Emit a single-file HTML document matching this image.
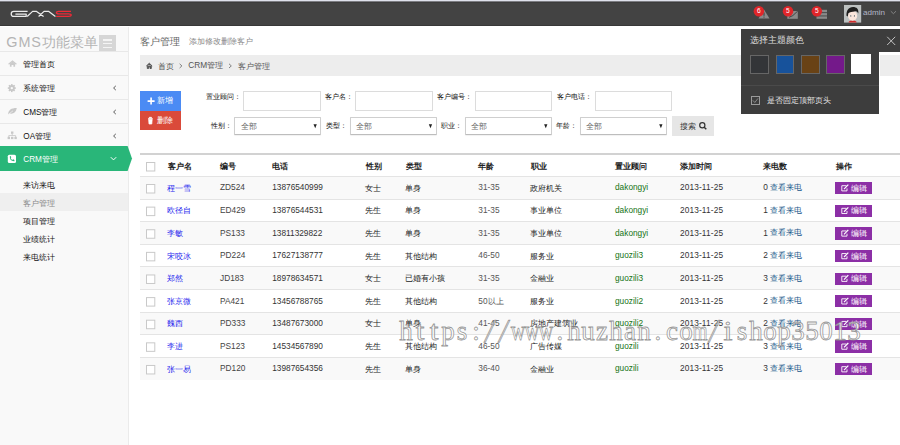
<!DOCTYPE html>
<html><head><meta charset="utf-8"><style>
*{margin:0;padding:0;box-sizing:border-box}
html,body{width:900px;height:445px;overflow:hidden;background:#fff;font-family:"Liberation Sans",sans-serif;color:#333}
.a{position:absolute;white-space:nowrap}
svg{position:absolute;overflow:visible}
</style></head><body>
<div class="a" style="left:0px;top:0px;width:900px;height:26px;background:#434343;"></div>
<div class="a" style="left:0px;top:0px;width:900px;height:1px;background:#dfe1ec;"></div>
<div class="a" style="left:0px;top:1px;width:900px;height:1px;background:#7d7d82;"></div>
<div class="a" style="left:0px;top:2px;width:900px;height:1px;background:#3c3c3c;"></div>
<div class="a" style="left:0px;top:25px;width:900px;height:1px;background:#383838;"></div>
<div class="a" style="left:0px;top:26px;width:900px;height:1px;background:#ffffff;"></div>
<svg style="left:0;top:0" width="900" height="27">
<g fill="none" stroke-linecap="butt" stroke-linejoin="round">
<path d="M27.6,11.4 H13.8 C11.9,11.4 11.2,12.6 11.2,13.9 C11.2,15.2 11.9,16.4 13.8,16.4 H26.2 L26.2,14 H15.4" stroke="#ececec" stroke-width="1.25"/>
<path d="M27.2,16.5 L32.6,11.4 H36.6 L43.6,16.5 M38.6,16.5 L44,11.4 H48.8 L55.4,16.5" stroke="#ececec" stroke-width="1.25"/>
<path d="M71,11.4 H58.8 C57,11.4 56.4,12.2 56.4,12.8 C56.4,13.5 57.2,13.9 58.8,13.9 H68.6 C70.4,13.9 71.2,14.5 71.2,15.1 C71.2,15.9 70.4,16.4 68.6,16.4 H56.2" stroke="#ee2a36" stroke-width="1.3"/>
</g></svg>
<svg style="left:0;top:0" width="900" height="27">
<path d="M764,9.5 L769.5,18.5 H758.5 Z" fill="#8a8a8a"/><path d="M764,12.5 V15.8 M764,16.6 V17.6" stroke="#3a3a3a" stroke-width="1"/>
<rect x="787.3" y="11" width="10.5" height="7.8" fill="#8a8a8a"/>
<path d="M789,17.3 L792.8,15.6 L797.8,11" stroke="#434343" stroke-width="1" fill="none"/>
<rect x="816.5" y="9.8" width="10.5" height="2.4" fill="#8a8a8a"/>
<rect x="816.5" y="13.1" width="10.5" height="2.4" fill="#8a8a8a"/>
<rect x="816.5" y="16.4" width="10.5" height="2.4" fill="#8a8a8a"/>
<circle cx="758.9" cy="11.3" r="5.25" fill="#e0262a"/>
<circle cx="788" cy="11.3" r="5.25" fill="#e0262a"/>
<circle cx="816.8" cy="11.3" r="5.25" fill="#e0262a"/>
</svg>
<div class="a" style="left:757.0px;top:6.9px;font-size:6.6px;line-height:7.92px;color:#fff;">6</div>
<div class="a" style="left:786.1px;top:6.9px;font-size:6.6px;line-height:7.92px;color:#fff;">5</div>
<div class="a" style="left:814.9px;top:6.9px;font-size:6.6px;line-height:7.92px;color:#fff;">5</div>
<svg style="left:844px;top:4.6px" width="17.2" height="17.6" viewBox="0 0 17.2 17.6">
<rect width="17.2" height="17.6" fill="#bcc0c0"/>
<path d="M4.5,17.6 C4.8,16.2 6.5,15.6 8.6,15.6 C10.7,15.6 12.4,16.2 12.7,17.6 Z" fill="#d42a2a"/>
<ellipse cx="8.6" cy="10.8" rx="4.6" ry="4.9" fill="#fae6dc"/>
<path d="M2.5,10.8 C2.2,5.5 4.5,2 9,2 C12.5,2 15,4 14.3,8.5 C13.5,6.8 12.2,6.2 10.5,6.4 C8.2,6.6 5.8,6.8 4.3,8.2 L3.8,11.5 Z" fill="#1e1e1e"/>
<ellipse cx="6.7" cy="10.8" rx="1" ry="0.9" fill="#fff"/><ellipse cx="10.5" cy="10.8" rx="1" ry="0.9" fill="#fff"/>
<circle cx="6.8" cy="10.9" r="0.6" fill="#333"/><circle cx="10.4" cy="10.9" r="0.6" fill="#333"/>
</svg>
<div class="a" style="left:863.0px;top:8.3px;font-size:8.1px;line-height:9.72px;color:#b2b6c8;">admin</div>
<svg style="left:0;top:0" width="900" height="27"><path d="M890.8,11.2 L893.4,13.7 L896,11.2" stroke="#8a8a8a" stroke-width="0.9" fill="none"/></svg>
<div class="a" style="left:0px;top:27px;width:128px;height:418px;background:#f9f9f9;"></div>
<div class="a" style="left:128px;top:27px;width:1px;height:418px;background:#ebebeb;"></div>
<div class="a" style="left:6.3px;top:34.3px;font-size:14.4px;line-height:17.28px;color:#b4b4b4;letter-spacing:0.9px">GMS</div>
<div class="a" style="left:41.8px;top:34.6px;font-size:13.6px;line-height:16.32px;color:#b4b4b4;">功能菜单</div>
<div class="a" style="left:99px;top:35px;width:17px;height:16.5px;background:#d6d6d6;"></div>
<div class="a" style="left:103px;top:39.4px;width:9px;height:1.2px;background:#f4f4f4;"></div>
<div class="a" style="left:103px;top:43.0px;width:9px;height:1.2px;background:#f4f4f4;"></div>
<div class="a" style="left:103px;top:46.6px;width:9px;height:1.2px;background:#f4f4f4;"></div>
<div class="a" style="left:0px;top:51px;width:128px;height:1px;background:#e8e8e8;"></div>
<div class="a" style="left:0px;top:75px;width:128px;height:1px;background:#e8e8e8;"></div>
<div class="a" style="left:0px;top:99px;width:128px;height:1px;background:#e8e8e8;"></div>
<div class="a" style="left:0px;top:123px;width:128px;height:1px;background:#e8e8e8;"></div>
<div class="a" style="left:23.3px;top:60.3px;font-size:8.2px;line-height:9.84px;color:#111;">管理首页</div>
<div class="a" style="left:23.3px;top:84.3px;font-size:8.2px;line-height:9.84px;color:#111;">系统管理</div>
<svg style="left:0;top:0" width="128" height="300"><path d="M115.8,85.9 L113.6,88 L115.8,90.1" stroke="#444" stroke-width="0.9" fill="none"/></svg>
<div class="a" style="left:23.3px;top:108.3px;font-size:8.2px;line-height:9.84px;color:#111;">CMS管理</div>
<svg style="left:0;top:0" width="128" height="300"><path d="M115.8,109.9 L113.6,112 L115.8,114.1" stroke="#444" stroke-width="0.9" fill="none"/></svg>
<div class="a" style="left:23.3px;top:132.3px;font-size:8.2px;line-height:9.84px;color:#111;">OA管理</div>
<svg style="left:0;top:0" width="128" height="300"><path d="M115.8,133.9 L113.6,136 L115.8,138.1" stroke="#444" stroke-width="0.9" fill="none"/></svg>
<svg style="left:0;top:0" width="128" height="200">
<path d="M8.6,64.3 L12.5,61.0 L16.4,64.3" stroke="#cbcbcb" stroke-width="1.2" fill="none"/><path d="M9.9,63.4 L12.5,61.4 L15.1,63.4 V66.8 H13.4 V64.9 H11.6 V66.8 H9.9 Z" fill="#cbcbcb"/>
<g transform="translate(11.8,88.1)" fill="#c8c8c8"><rect x="-0.8" y="-4" width="1.6" height="8"/><rect x="-0.8" y="-4" width="1.6" height="8" transform="rotate(45)"/><rect x="-0.8" y="-4" width="1.6" height="8" transform="rotate(90)"/><rect x="-0.8" y="-4" width="1.6" height="8" transform="rotate(135)"/><circle r="3"/><circle r="1.2" fill="#f9f9f9"/></g>
<path d="M8,114.5 C8.5,110 11,108 16.8,108 C16,112.5 13.5,114.2 9.5,113.5" fill="#c8c8c8"/>
<path d="M8,114.6 L13,110.8" stroke="#f9f9f9" stroke-width="0.6"/>
<rect x="11" y="131.5" width="2.4" height="2.3" fill="#c8c8c8"/>
<path d="M12.2,133.8 V135.5 M8.8,137 V135.5 H15.6 V137" stroke="#c8c8c8" stroke-width="0.8" fill="none"/>
<rect x="7.6" y="136.8" width="2.4" height="2.3" fill="#c8c8c8"/><rect x="11" y="136.8" width="2.4" height="2.3" fill="#c8c8c8"/><rect x="14.4" y="136.8" width="2.4" height="2.3" fill="#c8c8c8"/>
</svg>
<svg style="left:0;top:0" width="140" height="200">
<path d="M0,146 H127.6 L132,158.5 L127.6,171 H0 Z" fill="#29b679"/>
<rect x="7.8" y="154.8" width="8.2" height="8.2" rx="1.5" fill="#fff"/>
<path d="M9.8,156.6 C9.6,159.5 11.5,161.5 14.3,161.3 L14.5,160 L13.1,159.3 L12.4,160 C11.5,159.6 10.9,159 10.6,158 L11.3,157.3 L10.6,155.9 Z" fill="#29b679"/>
<path d="M110.8,157.2 L113.5,159.9 L116.2,157.2" stroke="#fff" stroke-width="1" fill="none"/>
</svg>
<div class="a" style="left:23.3px;top:154.6px;font-size:8.2px;line-height:9.84px;color:#fff;">CRM管理</div>
<div class="a" style="left:0px;top:193px;width:128px;height:17.6px;background:#efefef;"></div>
<div class="a" style="left:23.2px;top:180.6px;font-size:8.2px;line-height:9.84px;color:#111;">来访来电</div>
<div class="a" style="left:23.2px;top:198.6px;font-size:8.2px;line-height:9.84px;color:#888;">客户管理</div>
<div class="a" style="left:23.2px;top:216.6px;font-size:8.2px;line-height:9.84px;color:#111;">项目管理</div>
<div class="a" style="left:23.2px;top:234.6px;font-size:8.2px;line-height:9.84px;color:#111;">业绩统计</div>
<div class="a" style="left:23.2px;top:252.60000000000002px;font-size:8.2px;line-height:9.84px;color:#111;">来电统计</div>
<div class="a" style="left:140.3px;top:35.9px;font-size:10.2px;line-height:12.24px;color:#666;">客户管理</div>
<div class="a" style="left:189.2px;top:37.1px;font-size:8.1px;line-height:9.72px;color:#888;">添加修改删除客户</div>
<div class="a" style="left:140px;top:55px;width:760px;height:21px;background:#ededed;"></div>
<svg style="left:0;top:0" width="300" height="80">
<path d="M146.4,66 L149.3,63.2 L152.2,66 M147.3,65.4 V68.5 H148.6 V66.7 H150 V68.5 H151.3 V65.4" stroke="#555" stroke-width="0.9" fill="#555"/>
<path d="M179.6,63.8 L181.9,65.9 L179.6,68" stroke="#666" stroke-width="0.8" fill="none"/>
<path d="M229,63.8 L231.3,65.9 L229,68" stroke="#666" stroke-width="0.8" fill="none"/>
</svg>
<div class="a" style="left:158px;top:60.5px;font-size:8.4px;line-height:10.08px;color:#555;">首页</div>
<div class="a" style="left:188.3px;top:61.1px;font-size:8.3px;line-height:9.96px;color:#555;">CRM管理</div>
<div class="a" style="left:237.6px;top:60.5px;font-size:8.4px;line-height:10.08px;color:#555;">客户管理</div>
<div class="a" style="left:140px;top:91px;width:40.8px;height:19.6px;background:#4b8bf4;"></div>
<div class="a" style="left:140px;top:110.6px;width:40.8px;height:19px;background:#da4a3a;"></div>
<svg style="left:0;top:0" width="200" height="140">
<path d="M151.1,97.6 V104.6 M147.6,101.1 H154.6" stroke="#fff" stroke-width="1.6"/>
<path d="M148,118.5 H152.8 M149.3,118.3 V117.3 H151.5 V118.3 M148.6,119.2 H152.2 L151.8,124 H149 Z" stroke="#fff" stroke-width="0.7" fill="#fff"/>
</svg>
<div class="a" style="left:156.6px;top:96.2px;font-size:8.3px;line-height:9.96px;color:#fff;">新增</div>
<div class="a" style="left:156.6px;top:116.1px;font-size:8.3px;line-height:9.96px;color:#fff;">删除</div>
<div class="a" style="left:205.5px;top:92.6px;font-size:7.3px;line-height:8.76px;color:#111;">置业顾问：</div>
<div class="a" style="left:325.2px;top:92.6px;font-size:7.3px;line-height:8.76px;color:#111;">客户名：</div>
<div class="a" style="left:437px;top:92.6px;font-size:7.3px;line-height:8.76px;color:#111;">客户编号：</div>
<div class="a" style="left:556.6px;top:92.6px;font-size:7.3px;line-height:8.76px;color:#111;">客户电话：</div>
<div class="a" style="left:243.3px;top:91.1px;width:77.4px;height:19.5px;background:#fff;border:1px solid #dcdcdc"></div>
<div class="a" style="left:355.3px;top:91.1px;width:77.4px;height:19.5px;background:#fff;border:1px solid #dcdcdc"></div>
<div class="a" style="left:475.1px;top:91.1px;width:77.4px;height:19.5px;background:#fff;border:1px solid #dcdcdc"></div>
<div class="a" style="left:595px;top:91.1px;width:77.4px;height:19.5px;background:#fff;border:1px solid #dcdcdc"></div>
<div class="a" style="left:211px;top:121.9px;font-size:7.3px;line-height:8.76px;color:#111;">性别：</div>
<div class="a" style="left:326px;top:121.9px;font-size:7.3px;line-height:8.76px;color:#111;">类型：</div>
<div class="a" style="left:441.3px;top:121.9px;font-size:7.3px;line-height:8.76px;color:#111;">职业：</div>
<div class="a" style="left:556.3px;top:121.9px;font-size:7.3px;line-height:8.76px;color:#111;">年龄：</div>
<div class="a" style="left:234.2px;top:117px;width:87px;height:17.8px;background:#fff;border:1px solid #cfcfcf;border-bottom-color:#bdbdbd;border-radius:1px;box-shadow:0 1px 1px rgba(0,0,0,0.06)"></div>
<div class="a" style="left:240.6px;top:121.6px;font-size:8.1px;line-height:9.72px;color:#6a6a6a;">全部</div>
<svg style="left:0;top:0" width="700" height="140"><path d="M313.5,124.2 L316.79999999999995,124.2 L315.2,128.2 Z" fill="#222"/></svg>
<div class="a" style="left:349.5px;top:117px;width:87px;height:17.8px;background:#fff;border:1px solid #cfcfcf;border-bottom-color:#bdbdbd;border-radius:1px;box-shadow:0 1px 1px rgba(0,0,0,0.06)"></div>
<div class="a" style="left:355.9px;top:121.6px;font-size:8.1px;line-height:9.72px;color:#6a6a6a;">全部</div>
<svg style="left:0;top:0" width="700" height="140"><path d="M428.8,124.2 L432.1,124.2 L430.5,128.2 Z" fill="#222"/></svg>
<div class="a" style="left:464.8px;top:117px;width:87px;height:17.8px;background:#fff;border:1px solid #cfcfcf;border-bottom-color:#bdbdbd;border-radius:1px;box-shadow:0 1px 1px rgba(0,0,0,0.06)"></div>
<div class="a" style="left:471.2px;top:121.6px;font-size:8.1px;line-height:9.72px;color:#6a6a6a;">全部</div>
<svg style="left:0;top:0" width="700" height="140"><path d="M544.1,124.2 L547.4,124.2 L545.8,128.2 Z" fill="#222"/></svg>
<div class="a" style="left:579.9px;top:117px;width:87px;height:17.8px;background:#fff;border:1px solid #cfcfcf;border-bottom-color:#bdbdbd;border-radius:1px;box-shadow:0 1px 1px rgba(0,0,0,0.06)"></div>
<div class="a" style="left:586.3px;top:121.6px;font-size:8.1px;line-height:9.72px;color:#6a6a6a;">全部</div>
<svg style="left:0;top:0" width="700" height="140"><path d="M659.1999999999999,124.2 L662.5,124.2 L660.9,128.2 Z" fill="#222"/></svg>
<div class="a" style="left:672.3px;top:116.3px;width:41.3px;height:19.6px;background:#e6e6e6;"></div>
<div class="a" style="left:679.8px;top:120.8px;font-size:8.4px;line-height:10.08px;color:#333;">搜索</div>
<svg style="left:0;top:0" width="720" height="140"><circle cx="702.3" cy="125.3" r="2.6" fill="none" stroke="#333" stroke-width="1.2"/><path d="M704.2,127.2 L706.3,129.3" stroke="#333" stroke-width="1.4"/></svg>
<div class="a" style="left:140px;top:153px;width:760px;height:2px;background:#d2d2d2;"></div>
<div class="a" style="left:140px;top:176.0px;width:760px;height:22.62px;background:#f9f9f9;"></div>
<div class="a" style="left:140px;top:176.0px;width:760px;height:1px;background:#e4e4e4;"></div>
<div class="a" style="left:140px;top:198.62px;width:760px;height:1px;background:#e4e4e4;"></div>
<div class="a" style="left:140px;top:221.24px;width:760px;height:22.62px;background:#f9f9f9;"></div>
<div class="a" style="left:140px;top:221.24px;width:760px;height:1px;background:#e4e4e4;"></div>
<div class="a" style="left:140px;top:243.86px;width:760px;height:1px;background:#e4e4e4;"></div>
<div class="a" style="left:140px;top:266.48px;width:760px;height:22.62px;background:#f9f9f9;"></div>
<div class="a" style="left:140px;top:266.48px;width:760px;height:1px;background:#e4e4e4;"></div>
<div class="a" style="left:140px;top:289.1px;width:760px;height:1px;background:#e4e4e4;"></div>
<div class="a" style="left:140px;top:311.72px;width:760px;height:22.62px;background:#f9f9f9;"></div>
<div class="a" style="left:140px;top:311.72px;width:760px;height:1px;background:#e4e4e4;"></div>
<div class="a" style="left:140px;top:334.34px;width:760px;height:1px;background:#e4e4e4;"></div>
<div class="a" style="left:140px;top:356.96px;width:760px;height:22.62px;background:#f9f9f9;"></div>
<div class="a" style="left:140px;top:356.96px;width:760px;height:1px;background:#e4e4e4;"></div>
<div class="a" style="left:167.8px;top:162.0px;font-size:8.3px;line-height:9.96px;color:#222;font-weight:bold">客户名</div>
<div class="a" style="left:220px;top:162.0px;font-size:8.3px;line-height:9.96px;color:#222;font-weight:bold">编号</div>
<div class="a" style="left:272.2px;top:162.0px;font-size:8.3px;line-height:9.96px;color:#222;font-weight:bold">电话</div>
<div class="a" style="left:366.1px;top:162.0px;font-size:8.3px;line-height:9.96px;color:#222;font-weight:bold">性别</div>
<div class="a" style="left:405.7px;top:162.0px;font-size:8.3px;line-height:9.96px;color:#222;font-weight:bold">类型</div>
<div class="a" style="left:478.3px;top:162.0px;font-size:8.3px;line-height:9.96px;color:#222;font-weight:bold">年龄</div>
<div class="a" style="left:530.6px;top:162.0px;font-size:8.3px;line-height:9.96px;color:#222;font-weight:bold">职业</div>
<div class="a" style="left:615px;top:162.0px;font-size:8.3px;line-height:9.96px;color:#222;font-weight:bold">置业顾问</div>
<div class="a" style="left:679.9px;top:162.0px;font-size:8.3px;line-height:9.96px;color:#222;font-weight:bold">添加时间</div>
<div class="a" style="left:763.3px;top:162.0px;font-size:8.3px;line-height:9.96px;color:#222;font-weight:bold">来电数</div>
<div class="a" style="left:835.6px;top:162.0px;font-size:8.3px;line-height:9.96px;color:#222;font-weight:bold">操作</div>
<svg style="left:0;top:0" width="200" height="400"><rect x="146.5" y="162.50" width="8.3" height="8.5" fill="#fff" stroke="#c9c9c9" stroke-width="1"/><rect x="146.5" y="184.50" width="8.3" height="8.5" fill="#fff" stroke="#c9c9c9" stroke-width="1"/><rect x="146.5" y="207.12" width="8.3" height="8.5" fill="#fff" stroke="#c9c9c9" stroke-width="1"/><rect x="146.5" y="229.74" width="8.3" height="8.5" fill="#fff" stroke="#c9c9c9" stroke-width="1"/><rect x="146.5" y="252.36" width="8.3" height="8.5" fill="#fff" stroke="#c9c9c9" stroke-width="1"/><rect x="146.5" y="274.98" width="8.3" height="8.5" fill="#fff" stroke="#c9c9c9" stroke-width="1"/><rect x="146.5" y="297.60" width="8.3" height="8.5" fill="#fff" stroke="#c9c9c9" stroke-width="1"/><rect x="146.5" y="320.22" width="8.3" height="8.5" fill="#fff" stroke="#c9c9c9" stroke-width="1"/><rect x="146.5" y="342.84" width="8.3" height="8.5" fill="#fff" stroke="#c9c9c9" stroke-width="1"/><rect x="146.5" y="365.46" width="8.3" height="8.5" fill="#fff" stroke="#c9c9c9" stroke-width="1"/></svg>
<div class="a" style="left:167.10000000000002px;top:183.7px;font-size:7.8px;line-height:9.36px;color:#2626ee;">程一雪</div>
<div class="a" style="left:220px;top:183.4px;font-size:8.3px;line-height:9.96px;color:#444;">ZD524</div>
<div class="a" style="left:272.2px;top:183.4px;font-size:8.3px;line-height:9.96px;color:#333;">13876540999</div>
<div class="a" style="left:365.40000000000003px;top:183.7px;font-size:7.8px;line-height:9.36px;color:#222;">女士</div>
<div class="a" style="left:405.0px;top:183.7px;font-size:7.8px;line-height:9.36px;color:#222;">单身</div>
<div class="a" style="left:478.3px;top:183.4px;font-size:8.3px;line-height:9.96px;color:#555;">31-35</div>
<div class="a" style="left:529.9px;top:183.7px;font-size:7.8px;line-height:9.36px;color:#222;">政府机关</div>
<div class="a" style="left:615px;top:183.4px;font-size:8.3px;line-height:9.96px;color:#157315;">dakongyi</div>
<div class="a" style="left:679.9px;top:183.4px;font-size:8.3px;line-height:9.96px;color:#333;letter-spacing:0.15px">2013-11-25</div>
<div class="a" style="left:763.3px;top:183.4px;font-size:8.3px;line-height:9.96px;color:#333;">0</div>
<div class="a" style="left:769.8px;top:183.2px;font-size:7.6px;line-height:9.12px;color:#18578a;">查看来电</div>
<div class="a" style="left:835.1px;top:182.1px;width:36.7px;height:12.2px;background:#8c2fa6;"></div>
<svg style="left:0;top:0" width="900" height="400"><path d="M846.5,185.70 H841.8 V190.90 H847 V188.40" stroke="#fff" stroke-width="0.9" fill="none"/><path d="M844,189.10 L848.3,184.70" stroke="#fff" stroke-width="1.2"/></svg>
<div class="a" style="left:850.8px;top:183.8px;font-size:7.7px;line-height:9.24px;color:#fff;">编辑</div>
<div class="a" style="left:167.10000000000002px;top:206.32px;font-size:7.8px;line-height:9.36px;color:#2626ee;">欧径自</div>
<div class="a" style="left:220px;top:206.02px;font-size:8.3px;line-height:9.96px;color:#444;">ED429</div>
<div class="a" style="left:272.2px;top:206.02px;font-size:8.3px;line-height:9.96px;color:#333;">13876544531</div>
<div class="a" style="left:365.40000000000003px;top:206.32px;font-size:7.8px;line-height:9.36px;color:#222;">先生</div>
<div class="a" style="left:405.0px;top:206.32px;font-size:7.8px;line-height:9.36px;color:#222;">单身</div>
<div class="a" style="left:478.3px;top:206.02px;font-size:8.3px;line-height:9.96px;color:#555;">31-35</div>
<div class="a" style="left:529.9px;top:206.32px;font-size:7.8px;line-height:9.36px;color:#222;">事业单位</div>
<div class="a" style="left:615px;top:206.02px;font-size:8.3px;line-height:9.96px;color:#157315;">dakongyi</div>
<div class="a" style="left:679.9px;top:206.02px;font-size:8.3px;line-height:9.96px;color:#333;letter-spacing:0.15px">2013-11-25</div>
<div class="a" style="left:763.3px;top:206.02px;font-size:8.3px;line-height:9.96px;color:#333;">1</div>
<div class="a" style="left:769.8px;top:205.82px;font-size:7.6px;line-height:9.12px;color:#18578a;">查看来电</div>
<div class="a" style="left:835.1px;top:204.72px;width:36.7px;height:12.2px;background:#8c2fa6;"></div>
<svg style="left:0;top:0" width="900" height="400"><path d="M846.5,208.32 H841.8 V213.52 H847 V211.02" stroke="#fff" stroke-width="0.9" fill="none"/><path d="M844,211.72 L848.3,207.32" stroke="#fff" stroke-width="1.2"/></svg>
<div class="a" style="left:850.8px;top:206.42px;font-size:7.7px;line-height:9.24px;color:#fff;">编辑</div>
<div class="a" style="left:167.10000000000002px;top:228.94px;font-size:7.8px;line-height:9.36px;color:#2626ee;">李敏</div>
<div class="a" style="left:220px;top:228.64px;font-size:8.3px;line-height:9.96px;color:#444;">PS133</div>
<div class="a" style="left:272.2px;top:228.64px;font-size:8.3px;line-height:9.96px;color:#333;">13811329822</div>
<div class="a" style="left:365.40000000000003px;top:228.94px;font-size:7.8px;line-height:9.36px;color:#222;">先生</div>
<div class="a" style="left:405.0px;top:228.94px;font-size:7.8px;line-height:9.36px;color:#222;">单身</div>
<div class="a" style="left:478.3px;top:228.64px;font-size:8.3px;line-height:9.96px;color:#555;">31-35</div>
<div class="a" style="left:529.9px;top:228.94px;font-size:7.8px;line-height:9.36px;color:#222;">事业单位</div>
<div class="a" style="left:615px;top:228.64px;font-size:8.3px;line-height:9.96px;color:#157315;">dakongyi</div>
<div class="a" style="left:679.9px;top:228.64px;font-size:8.3px;line-height:9.96px;color:#333;letter-spacing:0.15px">2013-11-25</div>
<div class="a" style="left:763.3px;top:228.64px;font-size:8.3px;line-height:9.96px;color:#333;">1</div>
<div class="a" style="left:769.8px;top:228.44px;font-size:7.6px;line-height:9.12px;color:#18578a;">查看来电</div>
<div class="a" style="left:835.1px;top:227.34px;width:36.7px;height:12.2px;background:#8c2fa6;"></div>
<svg style="left:0;top:0" width="900" height="400"><path d="M846.5,230.94 H841.8 V236.14 H847 V233.64" stroke="#fff" stroke-width="0.9" fill="none"/><path d="M844,234.34 L848.3,229.94" stroke="#fff" stroke-width="1.2"/></svg>
<div class="a" style="left:850.8px;top:229.04px;font-size:7.7px;line-height:9.24px;color:#fff;">编辑</div>
<div class="a" style="left:167.10000000000002px;top:251.56px;font-size:7.8px;line-height:9.36px;color:#2626ee;">宋咬冰</div>
<div class="a" style="left:220px;top:251.26px;font-size:8.3px;line-height:9.96px;color:#444;">PD224</div>
<div class="a" style="left:272.2px;top:251.26px;font-size:8.3px;line-height:9.96px;color:#333;">17627138777</div>
<div class="a" style="left:365.40000000000003px;top:251.56px;font-size:7.8px;line-height:9.36px;color:#222;">先生</div>
<div class="a" style="left:405.0px;top:251.56px;font-size:7.8px;line-height:9.36px;color:#222;">其他结构</div>
<div class="a" style="left:478.3px;top:251.26px;font-size:8.3px;line-height:9.96px;color:#555;">46-50</div>
<div class="a" style="left:529.9px;top:251.56px;font-size:7.8px;line-height:9.36px;color:#222;">服务业</div>
<div class="a" style="left:615px;top:251.26px;font-size:8.3px;line-height:9.96px;color:#157315;">guozili3</div>
<div class="a" style="left:679.9px;top:251.26px;font-size:8.3px;line-height:9.96px;color:#333;letter-spacing:0.15px">2013-11-25</div>
<div class="a" style="left:763.3px;top:251.26px;font-size:8.3px;line-height:9.96px;color:#333;">2</div>
<div class="a" style="left:769.8px;top:251.06px;font-size:7.6px;line-height:9.12px;color:#18578a;">查看来电</div>
<div class="a" style="left:835.1px;top:249.96px;width:36.7px;height:12.2px;background:#8c2fa6;"></div>
<svg style="left:0;top:0" width="900" height="400"><path d="M846.5,253.56 H841.8 V258.76 H847 V256.26" stroke="#fff" stroke-width="0.9" fill="none"/><path d="M844,256.96 L848.3,252.56" stroke="#fff" stroke-width="1.2"/></svg>
<div class="a" style="left:850.8px;top:251.66px;font-size:7.7px;line-height:9.24px;color:#fff;">编辑</div>
<div class="a" style="left:167.10000000000002px;top:274.18px;font-size:7.8px;line-height:9.36px;color:#2626ee;">郑然</div>
<div class="a" style="left:220px;top:273.88px;font-size:8.3px;line-height:9.96px;color:#444;">JD183</div>
<div class="a" style="left:272.2px;top:273.88px;font-size:8.3px;line-height:9.96px;color:#333;">18978634571</div>
<div class="a" style="left:365.40000000000003px;top:274.18px;font-size:7.8px;line-height:9.36px;color:#222;">女士</div>
<div class="a" style="left:405.0px;top:274.18px;font-size:7.8px;line-height:9.36px;color:#222;">已婚有小孩</div>
<div class="a" style="left:478.3px;top:273.88px;font-size:8.3px;line-height:9.96px;color:#555;">31-35</div>
<div class="a" style="left:529.9px;top:274.18px;font-size:7.8px;line-height:9.36px;color:#222;">金融业</div>
<div class="a" style="left:615px;top:273.88px;font-size:8.3px;line-height:9.96px;color:#157315;">guozili3</div>
<div class="a" style="left:679.9px;top:273.88px;font-size:8.3px;line-height:9.96px;color:#333;letter-spacing:0.15px">2013-11-25</div>
<div class="a" style="left:763.3px;top:273.88px;font-size:8.3px;line-height:9.96px;color:#333;">3</div>
<div class="a" style="left:769.8px;top:273.68px;font-size:7.6px;line-height:9.12px;color:#18578a;">查看来电</div>
<div class="a" style="left:835.1px;top:272.58px;width:36.7px;height:12.2px;background:#8c2fa6;"></div>
<svg style="left:0;top:0" width="900" height="400"><path d="M846.5,276.18 H841.8 V281.38 H847 V278.88" stroke="#fff" stroke-width="0.9" fill="none"/><path d="M844,279.58 L848.3,275.18" stroke="#fff" stroke-width="1.2"/></svg>
<div class="a" style="left:850.8px;top:274.28px;font-size:7.7px;line-height:9.24px;color:#fff;">编辑</div>
<div class="a" style="left:167.10000000000002px;top:296.8px;font-size:7.8px;line-height:9.36px;color:#2626ee;">张京微</div>
<div class="a" style="left:220px;top:296.5px;font-size:8.3px;line-height:9.96px;color:#444;">PA421</div>
<div class="a" style="left:272.2px;top:296.5px;font-size:8.3px;line-height:9.96px;color:#333;">13456788765</div>
<div class="a" style="left:365.40000000000003px;top:296.8px;font-size:7.8px;line-height:9.36px;color:#222;">先生</div>
<div class="a" style="left:405.0px;top:296.8px;font-size:7.8px;line-height:9.36px;color:#222;">其他结构</div>
<div class="a" style="left:478.3px;top:296.5px;font-size:8.3px;line-height:9.96px;color:#555;">50以上</div>
<div class="a" style="left:529.9px;top:296.8px;font-size:7.8px;line-height:9.36px;color:#222;">服务业</div>
<div class="a" style="left:615px;top:296.5px;font-size:8.3px;line-height:9.96px;color:#157315;">guozili2</div>
<div class="a" style="left:679.9px;top:296.5px;font-size:8.3px;line-height:9.96px;color:#333;letter-spacing:0.15px">2013-11-25</div>
<div class="a" style="left:763.3px;top:296.5px;font-size:8.3px;line-height:9.96px;color:#333;">2</div>
<div class="a" style="left:769.8px;top:296.3px;font-size:7.6px;line-height:9.12px;color:#18578a;">查看来电</div>
<div class="a" style="left:835.1px;top:295.2px;width:36.7px;height:12.2px;background:#8c2fa6;"></div>
<svg style="left:0;top:0" width="900" height="400"><path d="M846.5,298.80 H841.8 V304.00 H847 V301.50" stroke="#fff" stroke-width="0.9" fill="none"/><path d="M844,302.20 L848.3,297.80" stroke="#fff" stroke-width="1.2"/></svg>
<div class="a" style="left:850.8px;top:296.9px;font-size:7.7px;line-height:9.24px;color:#fff;">编辑</div>
<div class="a" style="left:167.10000000000002px;top:319.42px;font-size:7.8px;line-height:9.36px;color:#2626ee;">魏西</div>
<div class="a" style="left:220px;top:319.12px;font-size:8.3px;line-height:9.96px;color:#444;">PD333</div>
<div class="a" style="left:272.2px;top:319.12px;font-size:8.3px;line-height:9.96px;color:#333;">13487673000</div>
<div class="a" style="left:365.40000000000003px;top:319.42px;font-size:7.8px;line-height:9.36px;color:#222;">女士</div>
<div class="a" style="left:405.0px;top:319.42px;font-size:7.8px;line-height:9.36px;color:#222;">单身</div>
<div class="a" style="left:478.3px;top:319.12px;font-size:8.3px;line-height:9.96px;color:#555;">41-45</div>
<div class="a" style="left:529.9px;top:319.42px;font-size:7.8px;line-height:9.36px;color:#222;">房地产建筑业</div>
<div class="a" style="left:615px;top:319.12px;font-size:8.3px;line-height:9.96px;color:#157315;">guozili2</div>
<div class="a" style="left:679.9px;top:319.12px;font-size:8.3px;line-height:9.96px;color:#333;letter-spacing:0.15px">2013-11-25</div>
<div class="a" style="left:763.3px;top:319.12px;font-size:8.3px;line-height:9.96px;color:#333;">2</div>
<div class="a" style="left:769.8px;top:318.92px;font-size:7.6px;line-height:9.12px;color:#18578a;">查看来电</div>
<div class="a" style="left:835.1px;top:317.82px;width:36.7px;height:12.2px;background:#8c2fa6;"></div>
<svg style="left:0;top:0" width="900" height="400"><path d="M846.5,321.42 H841.8 V326.62 H847 V324.12" stroke="#fff" stroke-width="0.9" fill="none"/><path d="M844,324.82 L848.3,320.42" stroke="#fff" stroke-width="1.2"/></svg>
<div class="a" style="left:850.8px;top:319.52px;font-size:7.7px;line-height:9.24px;color:#fff;">编辑</div>
<div class="a" style="left:167.10000000000002px;top:342.04px;font-size:7.8px;line-height:9.36px;color:#2626ee;">李进</div>
<div class="a" style="left:220px;top:341.74px;font-size:8.3px;line-height:9.96px;color:#444;">PS123</div>
<div class="a" style="left:272.2px;top:341.74px;font-size:8.3px;line-height:9.96px;color:#333;">14534567890</div>
<div class="a" style="left:365.40000000000003px;top:342.04px;font-size:7.8px;line-height:9.36px;color:#222;">先生</div>
<div class="a" style="left:405.0px;top:342.04px;font-size:7.8px;line-height:9.36px;color:#222;">其他结构</div>
<div class="a" style="left:478.3px;top:341.74px;font-size:8.3px;line-height:9.96px;color:#555;">46-50</div>
<div class="a" style="left:529.9px;top:342.04px;font-size:7.8px;line-height:9.36px;color:#222;">广告传媒</div>
<div class="a" style="left:615px;top:341.74px;font-size:8.3px;line-height:9.96px;color:#157315;">guozili</div>
<div class="a" style="left:679.9px;top:341.74px;font-size:8.3px;line-height:9.96px;color:#333;letter-spacing:0.15px">2013-11-25</div>
<div class="a" style="left:763.3px;top:341.74px;font-size:8.3px;line-height:9.96px;color:#333;">3</div>
<div class="a" style="left:769.8px;top:341.54px;font-size:7.6px;line-height:9.12px;color:#18578a;">查看来电</div>
<div class="a" style="left:835.1px;top:340.44px;width:36.7px;height:12.2px;background:#8c2fa6;"></div>
<svg style="left:0;top:0" width="900" height="400"><path d="M846.5,344.04 H841.8 V349.24 H847 V346.74" stroke="#fff" stroke-width="0.9" fill="none"/><path d="M844,347.44 L848.3,343.04" stroke="#fff" stroke-width="1.2"/></svg>
<div class="a" style="left:850.8px;top:342.14px;font-size:7.7px;line-height:9.24px;color:#fff;">编辑</div>
<div class="a" style="left:167.10000000000002px;top:364.66px;font-size:7.8px;line-height:9.36px;color:#2626ee;">张一易</div>
<div class="a" style="left:220px;top:364.36px;font-size:8.3px;line-height:9.96px;color:#444;">PD120</div>
<div class="a" style="left:272.2px;top:364.36px;font-size:8.3px;line-height:9.96px;color:#333;">13987654356</div>
<div class="a" style="left:365.40000000000003px;top:364.66px;font-size:7.8px;line-height:9.36px;color:#222;">先生</div>
<div class="a" style="left:405.0px;top:364.66px;font-size:7.8px;line-height:9.36px;color:#222;">单身</div>
<div class="a" style="left:478.3px;top:364.36px;font-size:8.3px;line-height:9.96px;color:#555;">36-40</div>
<div class="a" style="left:529.9px;top:364.66px;font-size:7.8px;line-height:9.36px;color:#222;">金融业</div>
<div class="a" style="left:615px;top:364.36px;font-size:8.3px;line-height:9.96px;color:#157315;">guozili</div>
<div class="a" style="left:679.9px;top:364.36px;font-size:8.3px;line-height:9.96px;color:#333;letter-spacing:0.15px">2013-11-25</div>
<div class="a" style="left:763.3px;top:364.36px;font-size:8.3px;line-height:9.96px;color:#333;">3</div>
<div class="a" style="left:769.8px;top:364.16px;font-size:7.6px;line-height:9.12px;color:#18578a;">查看来电</div>
<div class="a" style="left:835.1px;top:363.06px;width:36.7px;height:12.2px;background:#8c2fa6;"></div>
<svg style="left:0;top:0" width="900" height="400"><path d="M846.5,366.66 H841.8 V371.86 H847 V369.36" stroke="#fff" stroke-width="0.9" fill="none"/><path d="M844,370.06 L848.3,365.66" stroke="#fff" stroke-width="1.2"/></svg>
<div class="a" style="left:850.8px;top:364.76px;font-size:7.7px;line-height:9.24px;color:#fff;">编辑</div>
<div class="a" style="left:741px;top:28.8px;width:159px;height:23px;background:#3d3d3d;"></div>
<div class="a" style="left:741px;top:51px;width:138px;height:62.8px;background:#3d3d3d;"></div>
<div class="a" style="left:879px;top:52px;width:1.2px;height:62px;background:#ffffff;"></div>
<div class="a" style="left:750px;top:34.8px;font-size:8.8px;line-height:10.56px;color:#dedede;">选择主题颜色</div>
<svg style="left:0;top:0" width="900" height="120"><path d="M887.2,36.8 L895.2,45 M895.2,36.8 L887.2,45" stroke="#cfcfcf" stroke-width="0.9"/></svg>
<div class="a" style="left:750px;top:55.3px;width:18.7px;height:18.5px;background:#333538;border:1px solid #666"></div>
<div class="a" style="left:775.5px;top:55.3px;width:18.7px;height:18.5px;background:#17529b;border:1px solid #666"></div>
<div class="a" style="left:801px;top:55.3px;width:18.7px;height:18.5px;background:#694215;border:1px solid #666"></div>
<div class="a" style="left:826.4px;top:55.3px;width:18.7px;height:18.5px;background:#74198a;border:1px solid #666"></div>
<div class="a" style="left:851.3px;top:53.8px;width:19.9px;height:20.3px;background:#ffffff;"></div>
<div class="a" style="left:741px;top:85px;width:138px;height:1px;background:#4a4a4a;"></div>
<div class="a" style="left:751px;top:96px;width:8.5px;height:9px;background:transparent;border:1px solid #9a9a9a"></div>
<svg style="left:0;top:0" width="900" height="120"><path d="M752.8,100.3 L754.8,102.5 L758,98.4" stroke="#9a9a9a" stroke-width="0.8" fill="none"/></svg>
<div class="a" style="left:766.6px;top:95.8px;font-size:8.2px;line-height:9.84px;color:#e2e2e2;">是否固定顶部页头</div>
<div class="a" style="left:0;top:314.85px;width:900px;height:32px;font-family:&quot;Liberation Serif&quot;,serif;font-size:27px;line-height:32px;color:rgba(255,255,255,0.72);-webkit-text-stroke:0.8px rgba(140,140,140,0.9)"><div class="a" style="left:391.90px;top:0;width:28px;text-align:center;">h</div><div class="a" style="left:405.90px;top:0;width:28px;text-align:center;transform:scaleX(1.15);">t</div><div class="a" style="left:419.90px;top:0;width:28px;text-align:center;transform:scaleX(1.15);">t</div><div class="a" style="left:433.90px;top:0;width:28px;text-align:center;">p</div><div class="a" style="left:447.90px;top:0;width:28px;text-align:center;">s</div><div class="a" style="left:461.90px;top:0;width:28px;text-align:center;">:</div><div class="a" style="left:475.90px;top:0;width:28px;text-align:center;transform:scale(1.05,1.22) skewX(-12deg);">/</div><div class="a" style="left:489.90px;top:0;width:28px;text-align:center;transform:scale(1.05,1.22) skewX(-12deg);">/</div><div class="a" style="left:503.90px;top:0;width:28px;text-align:center;transform:scaleX(0.74);">w</div><div class="a" style="left:517.90px;top:0;width:28px;text-align:center;transform:scaleX(0.74);">w</div><div class="a" style="left:531.90px;top:0;width:28px;text-align:center;transform:scaleX(0.74);">w</div><div class="a" style="left:545.90px;top:0;width:28px;text-align:center;">.</div><div class="a" style="left:559.90px;top:0;width:28px;text-align:center;">h</div><div class="a" style="left:573.90px;top:0;width:28px;text-align:center;">u</div><div class="a" style="left:587.90px;top:0;width:28px;text-align:center;">z</div><div class="a" style="left:601.90px;top:0;width:28px;text-align:center;">h</div><div class="a" style="left:615.90px;top:0;width:28px;text-align:center;">a</div><div class="a" style="left:629.90px;top:0;width:28px;text-align:center;">n</div><div class="a" style="left:643.90px;top:0;width:28px;text-align:center;">.</div><div class="a" style="left:657.90px;top:0;width:28px;text-align:center;">c</div><div class="a" style="left:671.90px;top:0;width:28px;text-align:center;">o</div><div class="a" style="left:685.90px;top:0;width:28px;text-align:center;transform:scaleX(0.72);">m</div><div class="a" style="left:699.90px;top:0;width:28px;text-align:center;transform:scale(1.05,1.22) skewX(-12deg);">/</div><div class="a" style="left:713.90px;top:0;width:28px;text-align:center;transform:scaleX(1.2);">i</div><div class="a" style="left:727.90px;top:0;width:28px;text-align:center;">s</div><div class="a" style="left:741.90px;top:0;width:28px;text-align:center;">h</div><div class="a" style="left:755.90px;top:0;width:28px;text-align:center;">o</div><div class="a" style="left:769.90px;top:0;width:28px;text-align:center;">p</div><div class="a" style="left:783.90px;top:0;width:28px;text-align:center;">3</div><div class="a" style="left:797.90px;top:0;width:28px;text-align:center;">5</div><div class="a" style="left:811.90px;top:0;width:28px;text-align:center;">0</div><div class="a" style="left:825.90px;top:0;width:28px;text-align:center;">1</div><div class="a" style="left:839.90px;top:0;width:28px;text-align:center;">3</div></div>
</body></html>
